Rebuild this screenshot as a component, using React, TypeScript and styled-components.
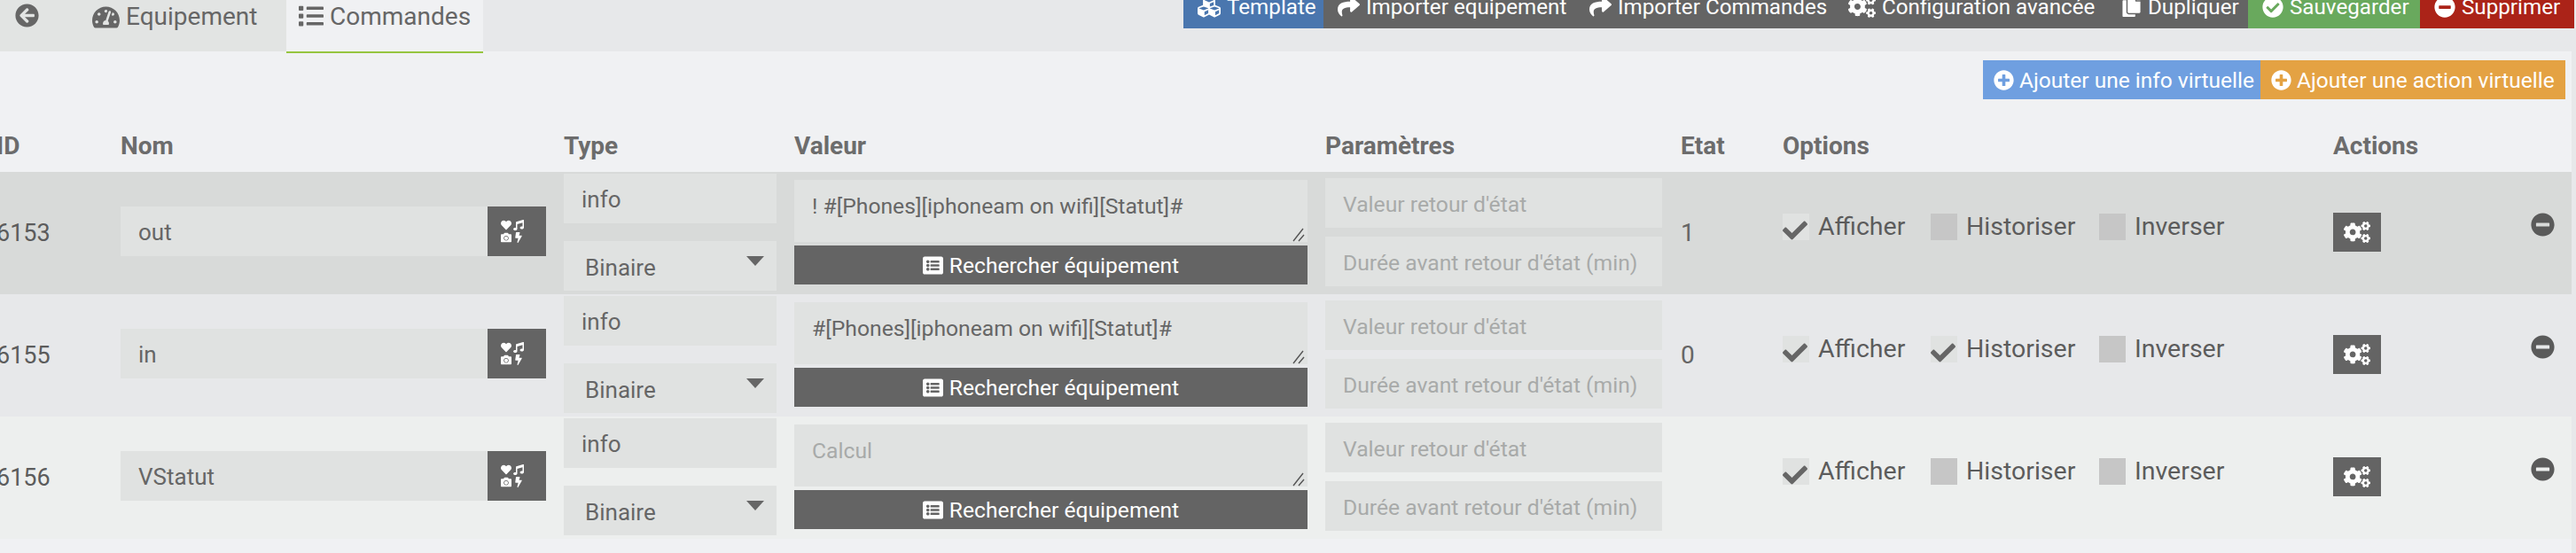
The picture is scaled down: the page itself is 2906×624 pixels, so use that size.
import React, { FC } from "react";
import styled, { createGlobalStyle } from "styled-components";
import {
  FaArrowCircleLeft,
  FaBolt,
  FaCamera,
  FaCheck,
  FaCheckCircle,
  FaCogs,
  FaCopy,
  FaCubes,
  FaHeart,
  FaList,
  FaListAlt,
  FaMinusCircle,
  FaMusic,
  FaPlusCircle,
  FaShare,
  FaTachometerAlt,
} from "react-icons/fa";

const COLUMNS = "136px 500px 260px 599px 401px 115px 621px 223px 46px";

interface Command {
  id: string;
  name: string;
  value: string;
  state: string;
  historize: boolean;
}

const commands: Command[] = [
  {
    id: "6153",
    name: "out",
    value: "! #[Phones][iphoneam on wifi][Statut]#",
    state: "1",
    historize: false,
  },
  {
    id: "6155",
    name: "in",
    value: "#[Phones][iphoneam on wifi][Statut]#",
    state: "0",
    historize: true,
  },
  { id: "6156", name: "VStatut", value: "", state: "", historize: false },
];

const rowColors = ["#d8dad9", "#e7e8ea", "#edefee"];

const GlobalStyle = createGlobalStyle`
  html, body {
    margin: 0;
    padding: 0;
    background: #e7e8ea;
  }
  * {
    box-sizing: border-box;
  }
  svg {
    flex: none;
  }
`;

const Page = styled.div`
  width: 2906px;
  height: 624px;
  overflow: hidden;
  background: #e7e8ea;
  font-family: Roboto, "Liberation Sans", sans-serif;
  font-size: 26px;
  color: #666;
`;

const Header = styled.header`
  display: flex;
  justify-content: space-between;
  height: 58px;
`;

const Tabs = styled.nav`
  display: flex;
  align-items: flex-start;
  width: 545px;
  height: 60px;
`;

const BackTab = styled.div`
  display: flex;
  width: 104px;
  height: 58px;
  padding: 4px 0 0 17px;
  background: #e2e4e3;
  font-size: 27px;
`;

const Tab = styled.div<{ $active?: boolean }>`
  display: flex;
  align-items: flex-start;
  gap: 7px;
  height: ${(p) => (p.$active ? "60px" : "58px")};
  width: ${(p) => (p.$active ? "222px" : "219px")};
  padding: ${(p) => (p.$active ? "0 0 0 14px" : "0")};
  line-height: 38px;
  font-size: 28px;
  background: ${(p) => (p.$active ? "#f0f1f3" : "#e2e4e3")};
  border-bottom: ${(p) => (p.$active ? "2px solid #96c53f" : "none")};

  svg {
    margin-top: 4px;
  }
`;

const Toolbar = styled.div`
  display: flex;
  height: 32px;
  margin-right: 2px;
  overflow: hidden;
`;

const ToolButton = styled.div<{ $color: string; $width: number }>`
  display: flex;
  align-items: center;
  flex: none;
  gap: 7px;
  width: ${(p) => p.$width}px;
  height: 49px;
  margin-top: -17px;
  padding-left: 16px;
  background: ${(p) => p.$color};
  color: #fff;
  font-size: 24.2px;
  white-space: nowrap;
`;

const Panel = styled.main`
  width: 2901px;
  height: 566px;
  padding-top: 10px;
  background: #f0f1f3;
`;

const AddBar = styled.div`
  display: flex;
  justify-content: flex-end;
  padding-right: 7px;
`;

const AddButton = styled.div<{ $color: string; $width: number }>`
  display: flex;
  align-items: center;
  gap: 6px;
  width: ${(p) => p.$width}px;
  height: 44px;
  padding-left: 12px;
  background: ${(p) => p.$color};
  color: #fff;
  font-size: 24.5px;
  white-space: nowrap;
`;

const HeadRow = styled.div`
  display: grid;
  grid-template-columns: ${COLUMNS};
  height: 82px;
  padding-top: 37px;
  color: #6c6c6c;
  font-size: 28px;
  font-weight: 700;
  line-height: 32px;
`;

const IdHead = styled.div`
  margin-left: -4px;
`;

const Row = styled.div<{ $color: string }>`
  display: grid;
  grid-template-columns: ${COLUMNS};
  height: 138px;
  background: ${(p) => p.$color};
`;

const IdCell = styled.div`
  margin-left: -4px;
  padding-top: 53px;
  font-size: 27px;
  line-height: 32px;
  color: #5c5c5c;
`;

const NameCell = styled.div`
  display: flex;
  width: 480px;
  height: 56px;
  margin-top: 39px;
`;

const Field = styled.input<{ $size?: number }>`
  display: block;
  width: 100%;
  min-width: 0;
  height: 56px;
  padding: 2px 20px 0;
  border: 0;
  outline: 0;
  border-radius: 0;
  background: #e0e2e1;
  color: #666;
  font-family: inherit;
  font-size: ${(p) => p.$size ?? 26}px;

  &::placeholder {
    color: #a8aaa9;
    opacity: 1;
  }
`;

const GlyphButton = styled.div`
  flex: none;
  display: flex;
  align-items: center;
  justify-content: center;
  width: 66px;
  height: 56px;
  padding-right: 10px;
  background: #646464;
  color: #fff;
`;

const IconGrid = styled.div`
  display: grid;
  grid-template-columns: 13px 13px;
  grid-auto-rows: 12px;
  gap: 2px 1px;
  font-size: 12px;
`;

const TypeCell = styled.div`
  display: flex;
  flex-direction: column;
  gap: 20px;
  width: 240px;
  padding-top: 2px;
`;

const SelectBox = styled.div`
  position: relative;
  height: 56px;
  padding-left: 24px;
  background: #e0e2e1;
  line-height: 60px;

  &::after {
    content: "";
    position: absolute;
    top: 17px;
    right: 14px;
    border-top: 11px solid #666;
    border-left: 10px solid transparent;
    border-right: 10px solid transparent;
  }
`;

const ValueCell = styled.div`
  display: flex;
  flex-direction: column;
  gap: 4px;
  width: 579px;
  padding-top: 9px;
`;

const ValueBox = styled.div`
  position: relative;
  height: 70px;
`;

const ValueArea = styled.textarea`
  display: block;
  width: 100%;
  height: 100%;
  padding: 15px 20px 0;
  border: 0;
  outline: 0;
  border-radius: 0;
  resize: none;
  background: #e0e2e1;
  color: #666;
  font-family: inherit;
  font-size: 24.7px;

  &::placeholder {
    color: #a8aaa9;
    opacity: 1;
  }
`;

const ResizeGrip = styled.svg`
  position: absolute;
  right: 3px;
  bottom: 0;
`;

const SearchButton = styled.div`
  display: flex;
  align-items: center;
  justify-content: center;
  gap: 7px;
  height: 44px;
  background: #646464;
  color: #fff;
  font-size: 24.6px;
`;

const ParamCell = styled.div`
  display: flex;
  flex-direction: column;
  gap: 10px;
  width: 380px;
  padding-top: 7px;
`;

const StateCell = styled.div`
  padding-top: 53px;
  font-size: 28px;
  line-height: 32px;
`;

const OptionsCell = styled.div`
  display: grid;
  grid-template-columns: 167px 190px 1fr;
  padding-top: 47px;
`;

const Option = styled.div`
  display: flex;
  align-items: flex-start;
  gap: 10px;
  height: 30px;
  font-size: 28.5px;
  line-height: 30px;
  color: #5c5c5c;
`;

const Check = styled.div<{ $on: boolean }>`
  position: relative;
  width: 30px;
  height: 30px;
  background: ${(p) => (p.$on ? "#e0e2e1" : "#c6c6c6")};
  color: #666;

  svg {
    position: absolute;
    left: 0;
    top: 5px;
  }
`;

const ActionCell = styled.div`
  padding-top: 46px;
`;

const GearButton = styled.div`
  display: flex;
  align-items: center;
  justify-content: center;
  width: 54px;
  height: 44px;
  background: #646464;
  color: #fff;
`;

const RemoveCell = styled.div`
  padding-top: 46px;
  color: #5a5a5a;
`;

const MediaGlyph: FC = () => (
  <IconGrid>
    <FaHeart />
    <FaMusic />
    <FaCamera />
    <FaBolt />
  </IconGrid>
);

const App: FC = () => (
  <Page>
    <GlobalStyle />
    <Header>
      <Tabs>
        <BackTab>
          <FaArrowCircleLeft />
        </BackTab>
        <Tab>
          <FaTachometerAlt size={31} />
          Equipement
        </Tab>
        <Tab $active>
          <FaList size={28} />
          Commandes
        </Tab>
      </Tabs>
      <Toolbar>
        <ToolButton $color="#4a76ae" $width={158}>
          <FaCubes size={26} />
          Template
        </ToolButton>
        <ToolButton $color="#646464" $width={284}>
          <FaShare size={25} />
          Importer equipement
        </ToolButton>
        <ToolButton $color="#646464" $width={292}>
          <FaShare size={25} />
          Importer Commandes
        </ToolButton>
        <ToolButton $color="#646464" $width={308}>
          <FaCogs size={31} />
          Configuration avancée
        </ToolButton>
        <ToolButton $color="#646464" $width={159}>
          <FaCopy size={23} />
          Dupliquer
        </ToolButton>
        <ToolButton $color="#69a95d" $width={194}>
          <FaCheckCircle size={24} />
          Sauvegarder
        </ToolButton>
        <ToolButton $color="#ab2318" $width={174}>
          <FaMinusCircle size={24} />
          Supprimer
        </ToolButton>
      </Toolbar>
    </Header>
    <Panel>
      <AddBar>
        <AddButton $color="#6f9fe0" $width={313}>
          <FaPlusCircle size={23} />
          Ajouter une info virtuelle
        </AddButton>
        <AddButton $color="#e4a243" $width={344}>
          <FaPlusCircle size={23} />
          Ajouter une action virtuelle
        </AddButton>
      </AddBar>
      <HeadRow>
        <IdHead>ID</IdHead>
        <div>Nom</div>
        <div>Type</div>
        <div>Valeur</div>
        <div>Paramètres</div>
        <div>Etat</div>
        <div>Options</div>
        <div>Actions</div>
      </HeadRow>
      {commands.map((command, index) => (
        <Row key={command.id} $color={rowColors[index]}>
          <IdCell>{command.id}</IdCell>
          <NameCell>
            <Field defaultValue={command.name} readOnly />
            <GlyphButton>
              <MediaGlyph />
            </GlyphButton>
          </NameCell>
          <TypeCell>
            <Field defaultValue="info" readOnly />
            <SelectBox>Binaire</SelectBox>
          </TypeCell>
          <ValueCell>
            <ValueBox>
              <ValueArea
                defaultValue={command.value}
                placeholder="Calcul"
                readOnly
              />
              <ResizeGrip width="16" height="16" viewBox="0 0 16 16">
                <path
                  d="M3 15 L14 1 M9 15 L15 8"
                  stroke="#555"
                  strokeWidth="1.4"
                  fill="none"
                />
              </ResizeGrip>
            </ValueBox>
            <SearchButton>
              <FaListAlt size={23} />
              Rechercher équipement
            </SearchButton>
          </ValueCell>
          <ParamCell>
            <Field $size={24.7} placeholder="Valeur retour d'état" readOnly />
            <Field
              $size={24.7}
              placeholder="Durée avant retour d'état (min)"
              readOnly
            />
          </ParamCell>
          <StateCell>{command.state}</StateCell>
          <OptionsCell>
            <Option>
              <Check $on>
                <FaCheck size={28} />
              </Check>
              Afficher
            </Option>
            <Option>
              <Check $on={command.historize}>
                {command.historize && <FaCheck size={28} />}
              </Check>
              Historiser
            </Option>
            <Option>
              <Check $on={false} />
              Inverser
            </Option>
          </OptionsCell>
          <ActionCell>
            <GearButton>
              <FaCogs size={30} />
            </GearButton>
          </ActionCell>
          <RemoveCell>
            <FaMinusCircle size={27} />
          </RemoveCell>
        </Row>
      ))}
    </Panel>
  </Page>
);

export default App;
